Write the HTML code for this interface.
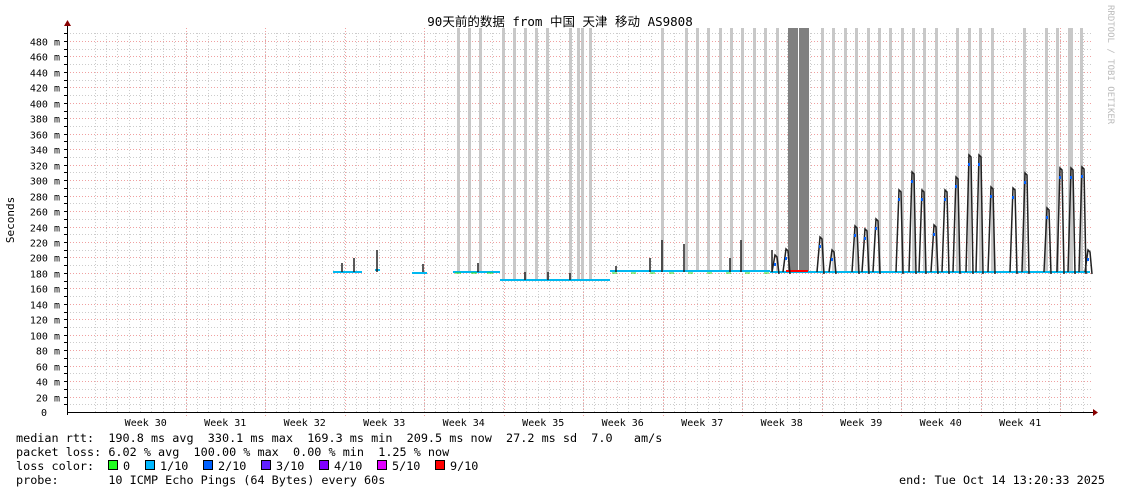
<!DOCTYPE html>
<html><head><meta charset="utf-8"><style>
body{margin:0;background:#fff;width:1121px;height:494px;overflow:hidden}
svg text{font-family:"DejaVu Sans Mono","Liberation Mono","Noto Sans CJK SC",monospace;white-space:pre}
</style></head><body>
<svg id="s" width="1121" height="494" xmlns="http://www.w3.org/2000/svg" xml:space="preserve">
<text x="560" y="26" font-size="12.5" text-anchor="middle" fill="#000">90天前的数据 from 中国 天津 移动 AS9808</text>
<text transform="translate(1108,5) rotate(90)" font-size="9" fill="#bbb">RRDTOOL / TOBI OETIKER</text>
<text transform="translate(14,220) rotate(-90)" font-size="11" text-anchor="middle" fill="#000">Seconds</text>
<g id="grid"></g><g id="bars"></g><g id="data"></g>
<line x1="67" y1="412.5" x2="1093" y2="412.5" stroke="#000"/>
<line x1="67.5" y1="25" x2="67.5" y2="415" stroke="#000"/>
<path d="M64,26 L71,26 L67.5,20Z" fill="#800"/>
<path d="M1093,409 L1093,416 L1098,412.5Z" fill="#800"/>
<g font-size="11.8" fill="#000">
<text x="16" y="442">median rtt:  190.8 ms avg  330.1 ms max  169.3 ms min  209.5 ms now  27.2 ms sd  7.0   am/s</text>
<text x="16" y="456">packet loss: 6.02 % avg  100.00 % max  0.00 % min  1.25 % now</text>
<text x="16" y="470">loss color:</text>
<text x="16" y="484">probe:       10 ICMP Echo Pings (64 Bytes) every 60s</text>
<text x="1105" y="484" text-anchor="end">end: Tue Oct 14 13:20:33 2025</text>
</g>
<g id="leg" font-size="11.8"></g>
</svg>
<script>
var NS="http://www.w3.org/2000/svg";
function el(p,t,a,txt){var e=document.createElementNS(NS,t);for(var k in a)e.setAttribute(k,a[k]);if(txt)e.textContent=txt;document.getElementById(p).appendChild(e);return e;}
function Y(v){return 412-v*0.7729;}
for(var v=10;v<=490;v+=10){var y=Math.round(Y(v))+0.5;var maj=v%20==0;
el('grid','line',{x1:67,x2:1093,y1:y,y2:y,stroke:maj?'#f0a0a0':'#ccc','stroke-width':1,'stroke-dasharray':'1,2'});
el('grid','line',{x1:64,x2:67,y1:y,y2:y,stroke:'#000'});
if(maj)el('grid','text',{x:60,y:y+4,'font-size':'10','text-anchor':'end',fill:'#000'},v+' m');}
el('grid','text',{x:47,y:416,'font-size':'10','text-anchor':'end',fill:'#000'},'0');
var w0=185.5,wk=79.5,d=wk/7;
for(var x=w0-8*d;x<1093;x+=d){if(x<68)continue;var xx=Math.round(x)+0.5;
el('grid','line',{x1:xx,x2:xx,y1:33,y2:412,stroke:'#ccc','stroke-dasharray':'1,2'});}
for(var i=0;i<12;i++){var xx=Math.round(w0+i*wk)+0.5;if(xx>1093)break;
el('grid','line',{x1:xx,x2:xx,y1:28,y2:416,stroke:'#f0a0a0','stroke-dasharray':'1,2'});
el('grid','text',{x:w0+i*wk-wk/2,y:426,'font-size':'10','text-anchor':'middle',fill:'#000'},'Week '+(30+i));}
var bars=[458,469,480,503,514,525,536,547,570,578,582,590,662,686,697,708,720,731,742,754,765,777,822,833,845,856,868,879,890,902,913,924,936,957,969,980,992,1024,1046,1057,1069,1071,1081];
bars.forEach(function(b){el('bars','rect',{x:b-1,y:28,width:3,height:(b>500&&b<610?252:244),fill:'#c8c8c8'});});
el('bars','rect',{x:788,y:28,width:10,height:244,fill:'#808080'});
el('bars','rect',{x:799,y:28,width:10,height:244,fill:'#808080'});
var segs=[[333,362,272],[375,380,270],[412,427,273],[453,500,272],[500,610,280],[610,770,271],[770,1090,272]];
segs.forEach(function(s){el('data','line',{x1:s[0],x2:s[1],y1:s[2],y2:s[2],stroke:'#00b8f0','stroke-width':2});});
el('data','line',{x1:455,x2:500,y1:273,y2:273,stroke:'#20e020','stroke-width':1,'stroke-dasharray':'6,10'});
el('data','line',{x1:612,x2:770,y1:273,y2:273,stroke:'#20e020','stroke-width':1,'stroke-dasharray':'5,14'});
el('data','line',{x1:786,x2:808,y1:271,y2:271,stroke:'#f00','stroke-width':2});
[[342,263],[354,258],[377,250],[423,264],[478,263],[525,272],[548,272],[570,273],[616,266],[650,258],[662,240],[684,244],[730,258],[741,240],[772,250]].forEach(function(p){
el('data','line',{x1:p[0],x2:p[0],y1:p[1],y2:p[0]>500&&p[0]<610?280:272,stroke:'#222','stroke-width':1.5});});
[[776,255],[787,249],[821,237],[833,250],[856,226],[866,229],[877,219],[900,190],[913,172],[923,190],[935,225],[946,190],[957,177],[970,155],[980,155],[992,187],[1014,188],[1026,173],[1048,208],[1061,168],[1072,168],[1083,167],[1089,250]].forEach(function(p){
var x=p[0];el('data','path',{d:'M'+(x-4)+',272 L'+(x-1)+','+p[1]+' L'+(x+1)+','+(p[1]+2)+' L'+(x+3)+',274',fill:'none',stroke:'#222','stroke-width':1.5});
el('data','rect',{x:x-2,y:p[1]+8,width:2,height:3,fill:'#0060ff'});});
var cols=[['0','#20ff20'],['1/10','#00b8ff'],['2/10','#0060ff'],['3/10','#6020ff'],['4/10','#8000ff'],['5/10','#e000ff'],['9/10','#ff0000']];
var lx=[108,145,203,261,319,377,435];
cols.forEach(function(c,i){el('leg','rect',{x:lx[i]+0.5,y:460.5,width:9,height:9,fill:c[1],stroke:'#000'});
el('leg','text',{x:lx[i]+15,y:470,fill:'#000'},c[0]);});
</script>
</body></html>
